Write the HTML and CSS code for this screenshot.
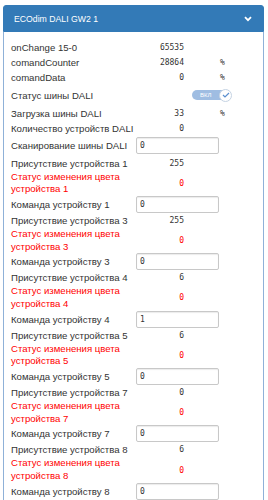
FILE: index.html
```html
<!DOCTYPE html>
<html lang="ru">
<head>
<meta charset="utf-8">
<title>ECOdim DALI GW2 1</title>
<link rel="stylesheet" href="styles.css">
</head>
<body>
<div class="panel">
  <div class="panel-heading">
    <span class="title">ECOdim DALI GW2 1</span>
    <svg class="chevron" width="8" height="6" viewBox="0 0 8 6"><polyline points="1,1.2 4,4.2 7,1.2" fill="none" stroke="#fff" stroke-width="1.8"/></svg>
  </div>
  <div class="panel-body">
    <div class="row"><span class="label">onChange 15-0</span><span class="val">65535</span><span class="unit"></span></div>
    <div class="row"><span class="label">comandCounter</span><span class="val">28864</span><span class="unit">%</span></div>
    <div class="row"><span class="label">comandData</span><span class="val">0</span><span class="unit">%</span></div>
    <div class="row row-toggle"><span class="label">Статус шины DALI</span><span class="val"></span>
      <span class="toggle"><span class="pill">ВКЛ</span><span class="knob"><svg width="8" height="6" viewBox="0 0 8 6"><polyline points="1,3 3,5 7,1" fill="none" stroke="#5b8fcf" stroke-width="1.2"/></svg></span></span>
    </div>
    <div class="row"><span class="label">Загрузка шины DALI</span><span class="val">33</span><span class="unit">%</span></div>
    <div class="row"><span class="label">Количество устройств DALI</span><span class="val">0</span><span class="unit"></span></div>
    <div class="row row-scan"><span class="label">Сканирование шины DALI</span><input class="field" type="text" value="0"></div>

    <div class="row"><span class="label">Присутствие устройства 1</span><span class="val">255</span><span class="unit"></span></div>
    <div class="row row-red"><span class="label">Статус изменения цвета устройства 1</span><span class="val">0</span><span class="unit"></span></div>
    <div class="row row-cmd"><span class="label">Команда устройству 1</span><input class="field" type="text" value="0"></div>

    <div class="row"><span class="label">Присутствие устройства 3</span><span class="val">255</span><span class="unit"></span></div>
    <div class="row row-red"><span class="label">Статус изменения цвета устройства 3</span><span class="val">0</span><span class="unit"></span></div>
    <div class="row row-cmd"><span class="label">Команда устройству 3</span><input class="field" type="text" value="0"></div>

    <div class="row"><span class="label">Присутствие устройства 4</span><span class="val">6</span><span class="unit"></span></div>
    <div class="row row-red"><span class="label">Статус изменения цвета устройства 4</span><span class="val">0</span><span class="unit"></span></div>
    <div class="row row-cmd"><span class="label">Команда устройству 4</span><input class="field" type="text" value="1"></div>

    <div class="row"><span class="label">Присутствие устройства 5</span><span class="val">6</span><span class="unit"></span></div>
    <div class="row row-red"><span class="label">Статус изменения цвета устройства 5</span><span class="val">0</span><span class="unit"></span></div>
    <div class="row row-cmd"><span class="label">Команда устройству 5</span><input class="field" type="text" value="0"></div>

    <div class="row"><span class="label">Присутствие устройства 7</span><span class="val">0</span><span class="unit"></span></div>
    <div class="row row-red"><span class="label">Статус изменения цвета устройства 7</span><span class="val">0</span><span class="unit"></span></div>
    <div class="row row-cmd"><span class="label">Команда устройству 7</span><input class="field" type="text" value="0"></div>

    <div class="row"><span class="label">Присутствие устройства 8</span><span class="val">6</span><span class="unit"></span></div>
    <div class="row row-red"><span class="label">Статус изменения цвета устройства 8</span><span class="val">0</span><span class="unit"></span></div>
    <div class="row row-cmd"><span class="label">Команда устройству 8</span><input class="field" type="text" value="0"></div>
  </div>
</div>
</body>
</html>
```
FILE: styles.css
```css
* { box-sizing: border-box; }
html, body { margin: 0; padding: 0; background: #fff; }
body {
  font-family: "Liberation Sans", Arial, sans-serif;
  color: #333;
}
.panel {
  margin: 5px 0 0 3px;
  width: 261px;
}
.panel-heading {
  height: 27px;
  background: #337ab7;
  border: 1px solid #337ab7;
  border-radius: 3px 3px 0 0;
  display: flex;
  align-items: center;
  justify-content: space-between;
  padding: 0 11px 0 10px;
  color: #fff;
}
.title {
  font-size: 8.7px;
}
.chevron { display: block; }
.panel-body {
  border-left: 1px solid #8fb1d8;
  border-right: 1px solid #8fb1d8;
  padding: 7.5px 0 20px 7px;
}
.row {
  display: grid;
  grid-template-columns: 125px 48px 1fr;
  align-items: center;
  height: 15px;
}
.label {
  font-size: 9.6px;
  line-height: 13px;
}
.val, .unit {
  font-family: "DejaVu Sans Mono", monospace;
  font-size: 8px;
}
.val { text-align: right; }
.unit { padding-left: 36px; }
.row-toggle { height: 21px; }
.row-scan { height: 20px; }
.row-cmd { height: 17px; }
.row-red { height: 25.4px; }
.row-red .label, .row-red .val { color: #ff0000; }
.row-red .label { line-height: 12.7px; }
.field {
  grid-column: 2 / 4;
  width: 83px;
  height: 17px;
  margin: 0;
  padding: 0 3px;
  border: 1px solid #c8c8c8;
  border-radius: 2px;
  box-shadow: inset 0 1px 1px rgba(0,0,0,0.08);
  background: #fff;
  font-family: "DejaVu Sans Mono", monospace;
  font-size: 8px;
  color: #333;
  outline: none;
}
.toggle {
  display: flex;
  align-items: center;
  margin-left: 8px;
}
.pill {
  width: 34px;
  height: 10px;
  border-radius: 5px;
  background: #9fbde2;
  color: #fff;
  font-size: 6px;
  line-height: 10px;
  padding-left: 8px;
}
.knob {
  width: 13px;
  height: 13px;
  border-radius: 50%;
  background: #fff;
  border: 1px solid #c5d3e3;
  margin-left: -7px;
  display: flex;
  align-items: center;
  justify-content: center;
}
.knob svg { display: block; }
```
